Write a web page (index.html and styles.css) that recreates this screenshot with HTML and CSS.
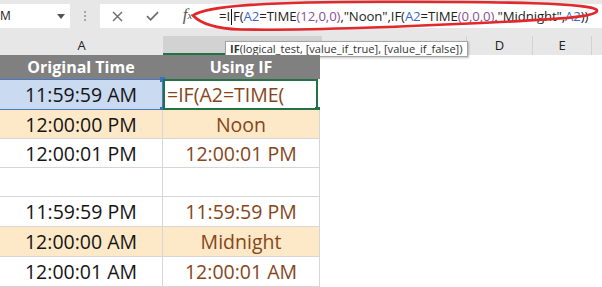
FILE: index.html
```html
<!DOCTYPE html>
<html>
<head>
<meta charset="utf-8">
<title>IF with TIME</title>
<link rel="stylesheet" href="styles.css">
</head>
<body>

<div id="ribbon">
	<div class="namebox"><span class="nametext">M</span><span class="caret"></span></div>
	<div class="grip"><i></i><i></i><i></i></div>
	<div class="fbar">
		<span class="fbtn">
			<svg width="11" height="11" viewBox="0 0 11 11"><path d="M1 1L10 10M10 1L1 10" stroke="#6b6b6b" stroke-width="1.4" fill="none"/></svg>
		</span>
		<span class="fbtn">
			<svg width="13" height="10" viewBox="0 0 13 10"><path d="M1 5.2L4.6 8.8L12 1.2" stroke="#6b6b6b" stroke-width="1.7" fill="none"/></svg>
		</span>
		<span class="fbtn fx"><i>f</i><sub>x</sub></span>
		<div class="formula">=I<span class="cursor"></span>F(<span class="ref">A2</span>=TIME<span class="arg">(12,0,0)</span>,"Noon",IF(<span class="ref">A2</span>=TIME<span class="arg">(0,0,0)</span>,"Midnight",<span class="ref">A2</span>))</div>
	</div>
</div> <!-- ends div#ribbon -->

<div id="colheads">
	<div class="ch cola">A</div>
	<div class="ch colb"></div>
	<div class="ch colc"></div>
	<div class="ch cold">D</div>
	<div class="ch cole">E</div>
	<div class="ch colf"></div>
</div>

<div class="tip"><b>IF</b>(logical_test, [value_if_true], [value_if_false])</div>

<svg class="circle" width="602" height="36" viewBox="0 0 602 36">
	<path d="M193 15.5C206 6 262 2 380 1.8C500 1.5 599 3 597 11C595 17 560 19 500 22C420 26 300 30.5 240 29.5C214 28.5 200 23 193 15.5Z" stroke="#e1282b" stroke-width="2.6" fill="none" stroke-linejoin="miter"/>
</svg>

<div id="sheet">
	<div class="cell head">Original Time</div>
	<div class="cell head">Using IF</div>

	<div class="cell refcell">11:59:59 AM<i class="hdl h1"></i><i class="hdl h2"></i></div>
	<div class="cell edit">=IF(A2=TIME(<i class="hdl h3"></i></div>

	<div class="cell orange">12:00:00 PM</div>
	<div class="cell orange res">Noon</div>

	<div class="cell">12:00:01 PM</div>
	<div class="cell res">12:00:01 PM</div>

	<div class="cell"></div>
	<div class="cell"></div>

	<div class="cell">11:59:59 PM</div>
	<div class="cell res">11:59:59 PM</div>

	<div class="cell orange">12:00:00 AM</div>
	<div class="cell orange res">Midnight</div>

	<div class="cell">12:00:01 AM</div>
	<div class="cell res">12:00:01 AM</div>
</div> <!-- ends div#sheet -->

</body>
</html>
```

FILE: styles.css
```css
body {
	margin: 0;
	width: 602px;
	height: 287px;
	overflow: hidden;
	position: relative;
	background: #fff;
	font-family: "Open Sans", "Noto Sans", sans-serif;
}

#ribbon {
	display: flex;
	height: 36px;
	padding-top: 4px;
	box-sizing: border-box;
	background: #e7e7e7;
}

.namebox {
	width: 70px;
	height: 24px;
	background: #fff;
	position: relative;
	overflow: hidden;
	font-size: 12px;
	line-height: 24px;
	color: #222;
}

.caret {
	position: absolute;
	left: 57px;
	top: 10px;
	border-left: 4px solid transparent;
	border-right: 4px solid transparent;
	border-top: 5px solid #555;
}

.grip {
	width: 30px;
	display: flex;
	flex-direction: column;
	align-items: center;
	padding-top: 7px;
	gap: 2px;
}

.grip i {
	width: 2px;
	height: 2px;
	background: #a5a5a5;
}

.fbar {
	flex: 1;
	height: 24px;
	background: #fff;
	display: flex;
	align-items: center;
}

.fbtn {
	width: 35px;
	display: flex;
	justify-content: center;
	align-items: center;
}

.fx {
	font-family: "Liberation Serif", serif;
	font-size: 17px;
	color: #555;
	padding-bottom: 3px;
}

.fx sub {
	font-size: 11px;
	font-style: italic;
	vertical-align: -2px;
}

.formula {
	padding-left: 14px;
	font-size: 13.2px;
	color: #222;
	white-space: nowrap;
	letter-spacing: -0.1px;
}

.cursor {
	display: inline-block;
	width: 1px;
	height: 16px;
	background: #111;
	vertical-align: -4px;
	margin: 0 1px;
}

.ref {
	color: #3a67c4;
}

.arg {
	color: #8a4f8f;
}

#colheads {
	display: flex;
	height: 19px;
	background: #e7e7e7;
	font-size: 13px;
	color: #222;
}

.ch {
	box-sizing: border-box;
	border-right: 1px solid #d2d2d2;
	text-align: center;
	line-height: 19px;
}

.cola { width: 163px; border-right: none; }
.colb { width: 159px; background: #d2d2d2; border-bottom: 2px solid #217346; }
.colc { width: 145px; }
.cold { width: 66px; }
.cole { width: 59px; }
.colf { flex: 1; border-right: none; }

.tip {
	position: absolute;
	left: 225px;
	top: 41px;
	height: 16px;
	box-sizing: border-box;
	padding: 0 4px;
	border: 1px solid #a3a3a3;
	background: #fff;
	box-shadow: 1px 1px 2px rgba(0,0,0,0.25);
	font-size: 11.1px;
	line-height: 14px;
	color: #333;
	white-space: nowrap;
}

.circle {
	position: absolute;
	left: 0;
	top: 0;
}

#sheet {
	display: grid;
	grid-template-columns: 163px 157px;
	grid-template-rows: 24px 31px 29px 29px 29px 30px 30px 30px;
	font-size: 19.5px;
	color: #141414;
}

.cell {
	position: relative;
	box-sizing: border-box;
	border-right: 1px solid #d6d6d6;
	border-bottom: 1px solid #d6d6d6;
	display: flex;
	align-items: center;
	justify-content: center;
	white-space: nowrap;
}

.head {
	background: #808080;
	color: #fff;
	font-weight: bold;
	font-size: 16px;
	border-color: #808080;
}

.orange {
	background: #fde9c8;
}

.res {
	color: #86451a;
}

.refcell {
	background: #c9daf1;
	border: 1px solid #4a78c8;
	border-left: none;
}

.edit {
	border: 2px solid #217346;
	justify-content: flex-start;
	padding-left: 2px;
	color: #86451a;
	width: 155px;
}

.hdl {
	position: absolute;
	width: 5px;
	height: 5px;
	right: -3px;
}

.h1 { top: -3px; background: #3b6fc6; }
.h2 { bottom: -3px; background: #3b6fc6; }
.h3 { bottom: -4px; right: -4px; background: #217346; }
```
